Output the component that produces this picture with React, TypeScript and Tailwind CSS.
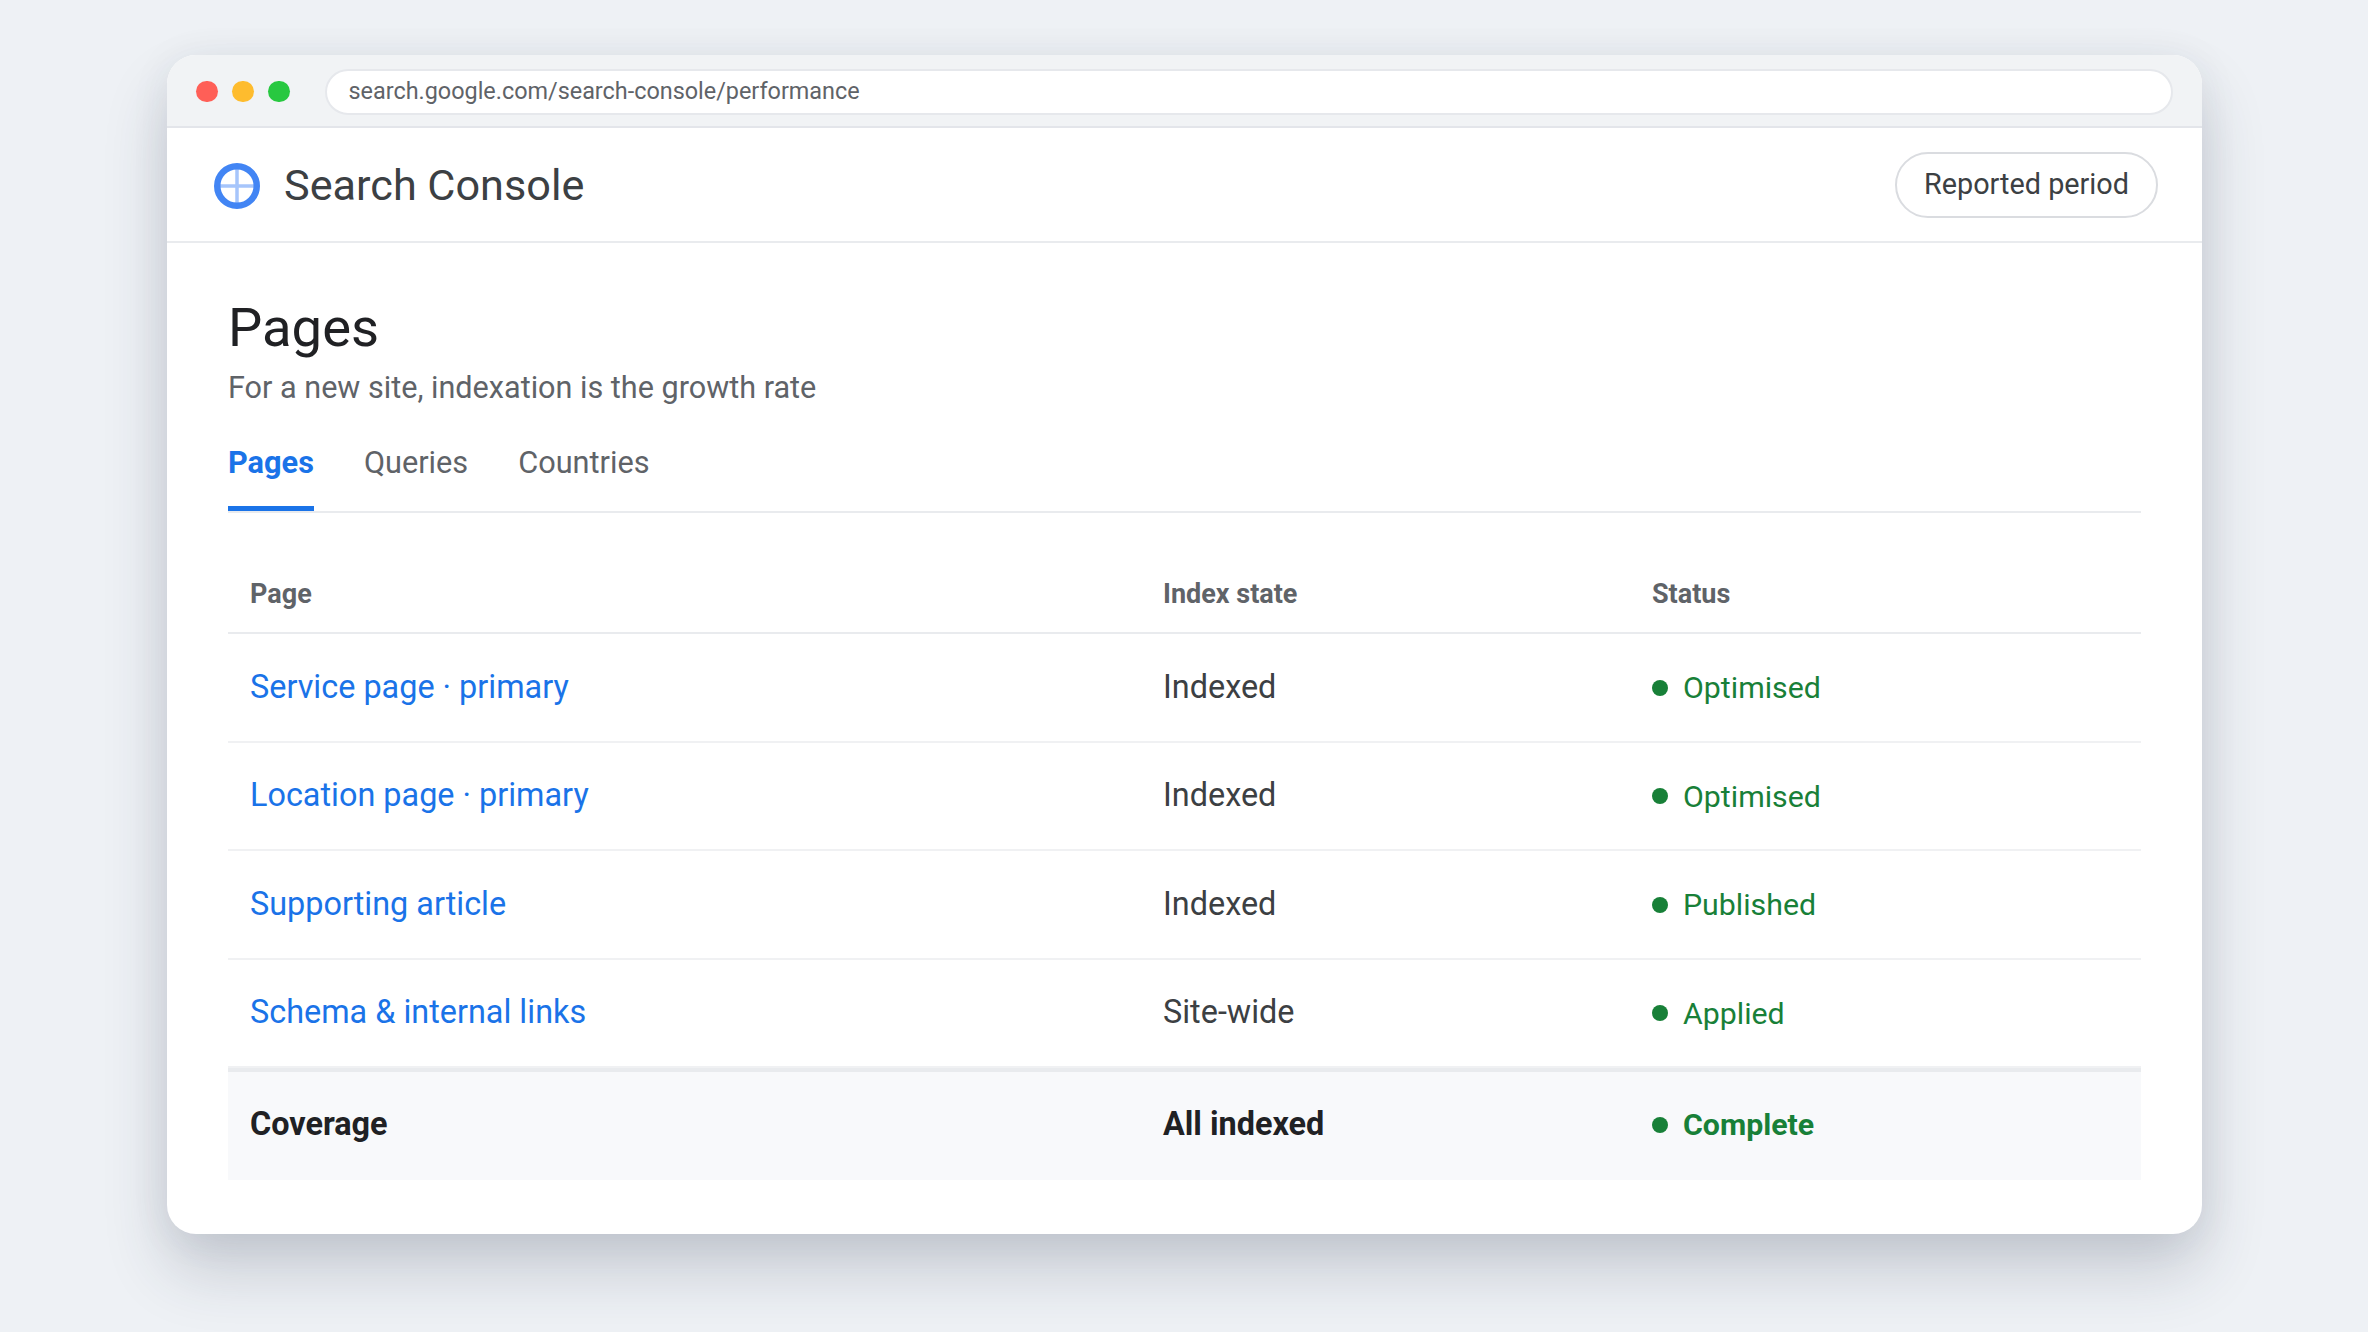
const rows = [
  { page: "Service page · primary", state: "Indexed", status: "Optimised" },
  { page: "Location page · primary", state: "Indexed", status: "Optimised" },
  { page: "Supporting article", state: "Indexed", status: "Published" },
  { page: "Schema & internal links", state: "Site-wide", status: "Applied" },
];

function StatusCell({ label, bold = false }: { label: string; bold?: boolean }) {
  return (
    <div className={`flex items-center gap-[15px] pt-[1px] text-[30.3px] text-[#188038] ${bold ? "font-bold" : ""}`}>
      <span className="h-4 w-4 rounded-full bg-[#188038]" />
      <span>{label}</span>
    </div>
  );
}

export default function App() {
  return (
    <div className="h-[1332px] w-full overflow-hidden bg-[#eef1f5] pl-[167px] pt-[55px] font-['Roboto',sans-serif]">
      <div className="w-[2035px] overflow-hidden rounded-[29px] bg-white shadow-[0_36px_64px_rgba(40,50,75,0.2),0_4px_40px_rgba(40,50,75,0.07)]">
        {/* browser chrome */}
        <div className="flex h-[73px] items-center gap-[35px] border-b-2 border-[#e3e5ea] bg-[#f1f3f5] pl-[29px] pr-[29px] pt-[2px]">
          <div className="flex gap-[14.5px]">
            <span className="h-[21.5px] w-[21.5px] rounded-full bg-[#ff5f57]" />
            <span className="h-[21.5px] w-[21.5px] rounded-full bg-[#febc2e]" />
            <span className="h-[21.5px] w-[21.5px] rounded-full bg-[#28c840]" />
          </div>
          <div className="flex h-[46px] flex-1 items-center rounded-full border-2 border-[#e6e8ec] bg-white pl-[22px] text-[23.4px] text-[#5f6368]">
            search.google.com/search-console/performance
          </div>
        </div>

        {/* app header */}
        <div className="flex h-[115px] items-center justify-between border-b-2 border-[#e9ebee] pl-[47px] pr-[44px]">
          <div className="flex items-center gap-[24px] pt-[2px]">
            <svg width="46" height="46" viewBox="0 0 46 46" fill="none">
              <path d="M23 3v40M3 23h40" stroke="#a6c5fb" strokeWidth="3.5" />
              <circle cx="23" cy="23" r="19.75" stroke="#4285f4" strokeWidth="6.5" />
            </svg>
            <span className="text-[43.2px] leading-none text-[#3c4043]">Search Console</span>
          </div>
          <button className="h-[66px] rounded-full border-2 border-[#dadce0] bg-white px-[27px] text-[28.8px] text-[#3c4043]">
            Reported period
          </button>
        </div>

        <div className="px-[61px] pb-[54px] pt-[50px]">
          <h1 className="text-[54.4px] font-normal leading-[70px] text-[#202124]">Pages</h1>
          <p className="mt-[5px] text-[30.6px] leading-[40px] text-[#5f6368]">
            For a new site, indexation is the growth rate
          </p>

          {/* tabs */}
          <div className="mt-[22px] flex gap-[50px] border-b-2 border-[#e9ebee] text-[30.7px] text-[#5f6368]">
            <div className="border-b-[5px] border-[#1a73e8] pb-[25px] pt-[15px] font-bold leading-[36px] text-[#1a73e8]">
              Pages
            </div>
            <div className="pt-[15px] leading-[36px]">Queries</div>
            <div className="pt-[15px] leading-[36px]">Countries</div>
          </div>

          {/* table */}
          <div className="mt-[41px]">
            <div className="grid h-[80px] grid-cols-[913px_489px_1fr] items-center border-b-2 border-[#e9ebee] px-[22px] pt-[2px] text-[27px] font-bold text-[#5f6368]">
              <div>Page</div>
              <div>Index state</div>
              <div>Status</div>
            </div>
            {rows.map((r) => (
              <div
                key={r.page}
                className="grid h-[108.5px] grid-cols-[913px_489px_1fr] items-center border-b-2 border-[#f0f1f3] px-[22px] text-[32.4px]"
              >
                <div className="text-[#1a73e8]">{r.page}</div>
                <div className="text-[#3c4043]">{r.state}</div>
                <StatusCell label={r.status} />
              </div>
            ))}
            <div className="grid h-[112px] grid-cols-[913px_489px_1fr] items-center border-t-4 border-[#e9ebee] bg-[#f8f9fb] px-[22px] pb-[3px] text-[32.4px] font-bold text-[#202124]">
              <div>Coverage</div>
              <div>All indexed</div>
              <StatusCell label="Complete" bold />
            </div>
          </div>
        </div>
      </div>
    </div>
  );
}
